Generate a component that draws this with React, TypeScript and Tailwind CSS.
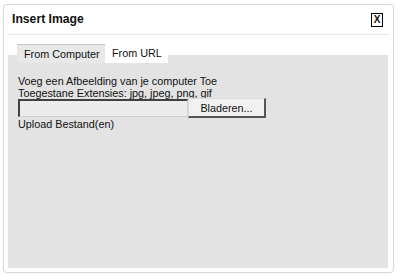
export default function App() {
  return (
    <div className="w-[400px] h-[278px] bg-white overflow-hidden font-['Liberation_Sans',Arial,sans-serif] text-[#111]">
      {/* dialog */}
      <div className="ml-[3px] mt-[4px] w-[391px] h-[269px] border border-[#d9d9d9] rounded-[4px] bg-white flex flex-col shadow-[0_0_2px_rgba(0,0,0,0.08)]">
        {/* title bar */}
        <div className="mx-[4px] h-[30px] border-b border-[#e6e6e6] flex items-center justify-between pl-[4px] pr-[6px]">
          <span className="text-[12.2px] font-bold leading-none">Insert Image</span>
          <span className="w-[12px] h-[14px] border border-black flex items-center justify-center text-[10px] font-bold leading-none">X</span>
        </div>

        {/* tab panel */}
        <div className="mt-[20px] ml-[4px] mr-[5px] mb-[4px] flex-1 bg-[#e3e3e3] flex flex-col">
          <div className="-mt-[11px] ml-[9px] h-[19px] flex text-[10.8px] leading-none">
            <div className="w-[88px] bg-[#e8e8e8] border-t border-[#c6c6c6] flex items-center pl-[7px]">
              From Computer
            </div>
            <div className="w-[63px] bg-white flex items-center pl-[7px]">From URL</div>
          </div>

          <div className="mt-[12px] pl-[10px] text-[10.8px] leading-[12px]">
            <div>Voeg een Afbeelding van je computer Toe</div>
            <div>Toegestane Extensies: jpg, jpeg, png, gif</div>
            <div className="-mt-px flex items-center">
              <div className="w-[170px] h-[18px] bg-[#ececec] border-t-2 border-l-2 border-t-[#404040] border-l-[#404040] border-b border-r border-b-[#cfcfcf] border-r-[#cfcfcf]" />
              <div className="w-[78px] h-[20px] bg-[#f1f1f1] border-t border-l border-t-[#dcdcdc] border-l-[#dcdcdc] border-r-2 border-b-2 border-r-[#555] border-b-[#555] flex items-center justify-center">
                Bladeren...
              </div>
            </div>
            <div>Upload Bestand(en)</div>
          </div>
        </div>
      </div>
    </div>
  );
}
